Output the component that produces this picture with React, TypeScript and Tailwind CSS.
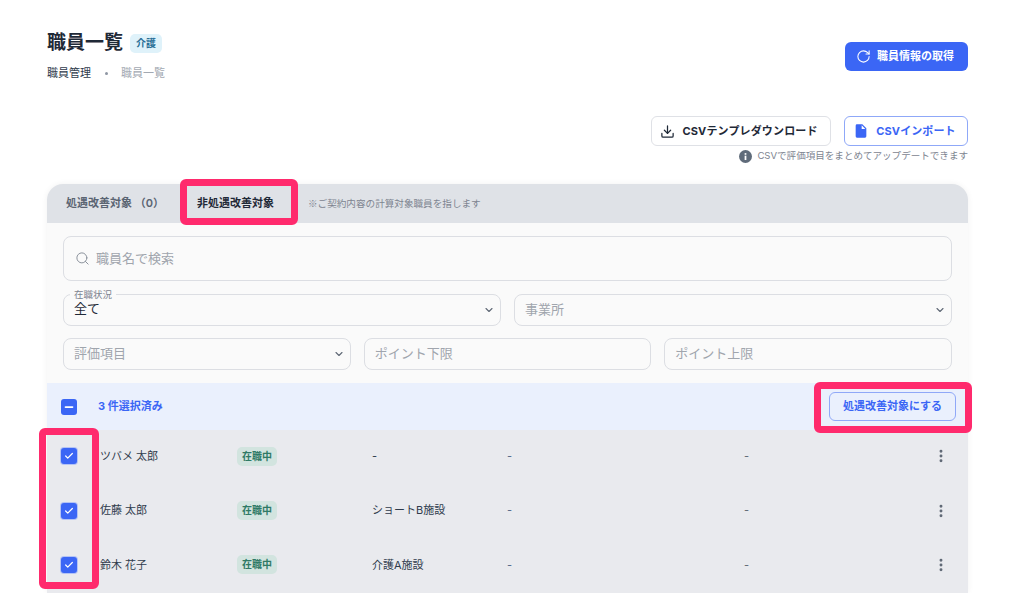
import { ChevronDown, Download, RotateCw, Search, Check, Minus, MoreVertical } from 'lucide-react';

const rows = [
  { name: 'ツバメ 太郎', office: '-' },
  { name: '佐藤 太郎', office: 'ショートB施設' },
  { name: '鈴木 花子', office: '介護A施設' },
];

const Checkbox = ({ mixed }: { mixed?: boolean }) => (
  <div className={`w-4 h-4 rounded-[3px] bg-[#3b66f5] flex items-center justify-center text-white ${mixed ? '' : 'shadow-[0_0_0_1px_#b4c3f5]'}`}>
    {mixed ? <Minus size={12} strokeWidth={3.5} /> : <Check size={10} strokeWidth={3} />}
  </div>
);

const Field = ({ label, select, className }: { label: string; select?: boolean; className: string }) => (
  <div className={`h-8 flex items-center justify-between pl-[10px] pr-[5px] border border-[#dcdee3] rounded-lg text-[13px] text-[#a0a5ad] ${className}`}>
    <span>{label}</span>
    {select && <ChevronDown size={12} strokeWidth={2.2} className="text-[#5f6875]" />}
  </div>
);

export default function App() {
  return (
    <div className="h-screen overflow-hidden relative bg-white pl-[47px] pr-[46px] text-[#1f2937] font-['Inter','Noto_Sans_CJK_JP',sans-serif]">
      <div className="flex justify-between items-start pt-[31px]">
        <div>
          <div className="flex items-center gap-[7px] h-6">
            <h1 className="text-[19px] leading-6 font-bold text-[#1f2937]">職員一覧</h1>
            <span className="h-[19px] w-8 rounded-[5px] bg-[#dff2fa] text-[#2a6f97] text-[10px] font-bold flex items-center justify-center">介護</span>
          </div>
          <div className="flex items-center mt-[10px] text-[11px] leading-4">
            <span className="text-[#2f3b4c]">職員管理</span>
            <span className="w-[3px] h-[3px] rounded-full bg-[#8e96a3] ml-[14px] mr-[13px]"></span>
            <span className="text-[#a3a9b2]">職員一覧</span>
          </div>
        </div>
        <button className="mt-[11px] w-[123px] h-[29px] pr-[3px] rounded-md bg-[#3b66f5] text-white text-[11px] font-bold flex items-center justify-center gap-[6px]">
          <RotateCw size={15} strokeWidth={1.7} />
          職員情報の取得
        </button>
      </div>

      <div className="flex justify-end gap-[13px] mt-[35px]">
        <button className="w-[180px] h-[30px] pr-[4px] rounded-md border border-[#dfe1e6] text-[#1f2937] text-[11px] tracking-[0.15px] font-bold flex items-center justify-center gap-[7px]">
          <Download size={15} strokeWidth={2} />
          CSVテンプレダウンロード
        </button>
        <button className="w-[124px] h-[30px] pr-[3px] rounded-md border border-[#8fa8f8] text-[#3b66f5] text-[11px] tracking-[0.1px] font-bold flex items-center justify-center gap-[7px]">
          <svg width="16" height="16" viewBox="0 0 24 24" fill="currentColor">
            <path d="M6 2h8l6 6v12a2 2 0 0 1-2 2H6a2 2 0 0 1-2-2V4a2 2 0 0 1 2-2zm7 1.5V9h5.5z" />
          </svg>
          CSVインポート
        </button>
      </div>
      <div className="flex justify-end items-center gap-[5px] mt-[3px] h-[15px] text-[9.55px] text-[#7d8490]">
        <svg width="13" height="13" viewBox="0 0 24 24" fill="#5f6b7a">
          <circle cx="12" cy="12" r="12" />
          <rect x="10.4" y="10.5" width="3.2" height="8" fill="#fff" />
          <rect x="10.4" y="5.8" width="3.2" height="3" fill="#fff" />
        </svg>
        CSVで評価項目をまとめてアップデートできます
      </div>

      <div className="mt-5 rounded-t-2xl bg-[#fafafa] shadow-[0_0_6px_rgba(0,0,0,0.06)]">
        <div className="h-[39px] bg-[#dfe2e7] rounded-t-2xl flex items-center text-[11px]">
          <span className="ml-[19px] w-[131px] font-semibold text-[#5a6472] whitespace-nowrap">処遇改善対象 （0）</span>
          <span className="font-bold text-[#1f2937]">非処遇改善対象</span>
          <span className="ml-[34px] text-[9.6px] text-[#7d8490] font-['Noto_Sans_CJK_JP',sans-serif]">※ご契約内容の計算対象職員を指します</span>
        </div>

        <div className="px-4 pt-[13px]">
          <div className="h-[45px] border border-[#dcdee3] rounded-lg flex items-center pl-[11px] gap-[6px] text-[13px] text-[#a0a5ad]">
            <Search size={15} strokeWidth={1.6} className="text-[#8b929c]" />
            職員名で検索
          </div>

          <div className="flex gap-[13px] mt-[13px]">
            <div className="relative flex-1 h-8 flex items-center justify-between pl-[10px] pr-[5px] border border-[#dcdee3] rounded-lg text-[13px] text-[#1f2937]">
              <span className="absolute left-[6px] top-[-6px] bg-[#fafafa] px-[4px] text-[9.5px] leading-[11px] text-[#7d8490]">在職状況</span>
              <span className="mt-[-3px]">全て</span>
              <ChevronDown size={12} strokeWidth={2.2} className="text-[#5f6875]" />
            </div>
            <Field label="事業所" select className="flex-1" />
          </div>

          <div className="flex gap-[13px] mt-3">
            <Field label="評価項目" select className="flex-1" />
            <Field label="ポイント下限" className="flex-1" />
            <Field label="ポイント上限" className="flex-1" />
          </div>
        </div>

        <div className="mt-[13px] h-[47px] bg-[#eaf0fd] flex items-center pl-[14px] pr-[12px]">
          <Checkbox mixed />
          <span className="ml-[21px] text-[11px] font-bold text-[#3b66f5]">3 件選択済み</span>
          <button className="ml-auto w-[127px] h-[29px] rounded-md border border-[#8fa8f8] text-[#3b66f5] text-[11px] font-bold">処遇改善対象にする</button>
        </div>

        <div className="bg-[#e9eaee]">
          {rows.map((r) => (
            <div key={r.name} className="h-[54.4px] pb-[2px] flex items-center text-[11px] text-[#2f3b4c]">
              <div className="w-[53px] pl-[14px]">
                <Checkbox />
              </div>
              <div className="w-[137px]">{r.name}</div>
              <div className="w-[135px]">
                <span className="w-10 h-[19px] rounded-[5px] bg-[#d2e4df] text-[#2f7a66] text-[10px] font-semibold flex items-center justify-center">在職中</span>
              </div>
              <div className="w-[135px]">{r.office}</div>
              <div className="w-[237px] text-[#55688a]">-</div>
              <div className="w-[189px] text-[#5f6875]">-</div>
              <MoreVertical size={16} strokeWidth={2.4} className="text-[#5f6875]" />
            </div>
          ))}
        </div>
      </div>

      <div className="absolute left-[180px] top-[179px] w-[118px] h-[46px] border-[7px] border-[#ff2a6d] rounded-[6px]"></div>
      <div className="absolute left-[814px] top-[382px] w-[158px] h-[51px] border-[7px] border-[#ff2a6d] rounded-[6px]"></div>
      <div className="absolute left-[39px] top-[428px] w-[60px] h-[161px] border-[7px] border-[#ff2a6d] rounded-[6px]"></div>
    </div>
  );
}
